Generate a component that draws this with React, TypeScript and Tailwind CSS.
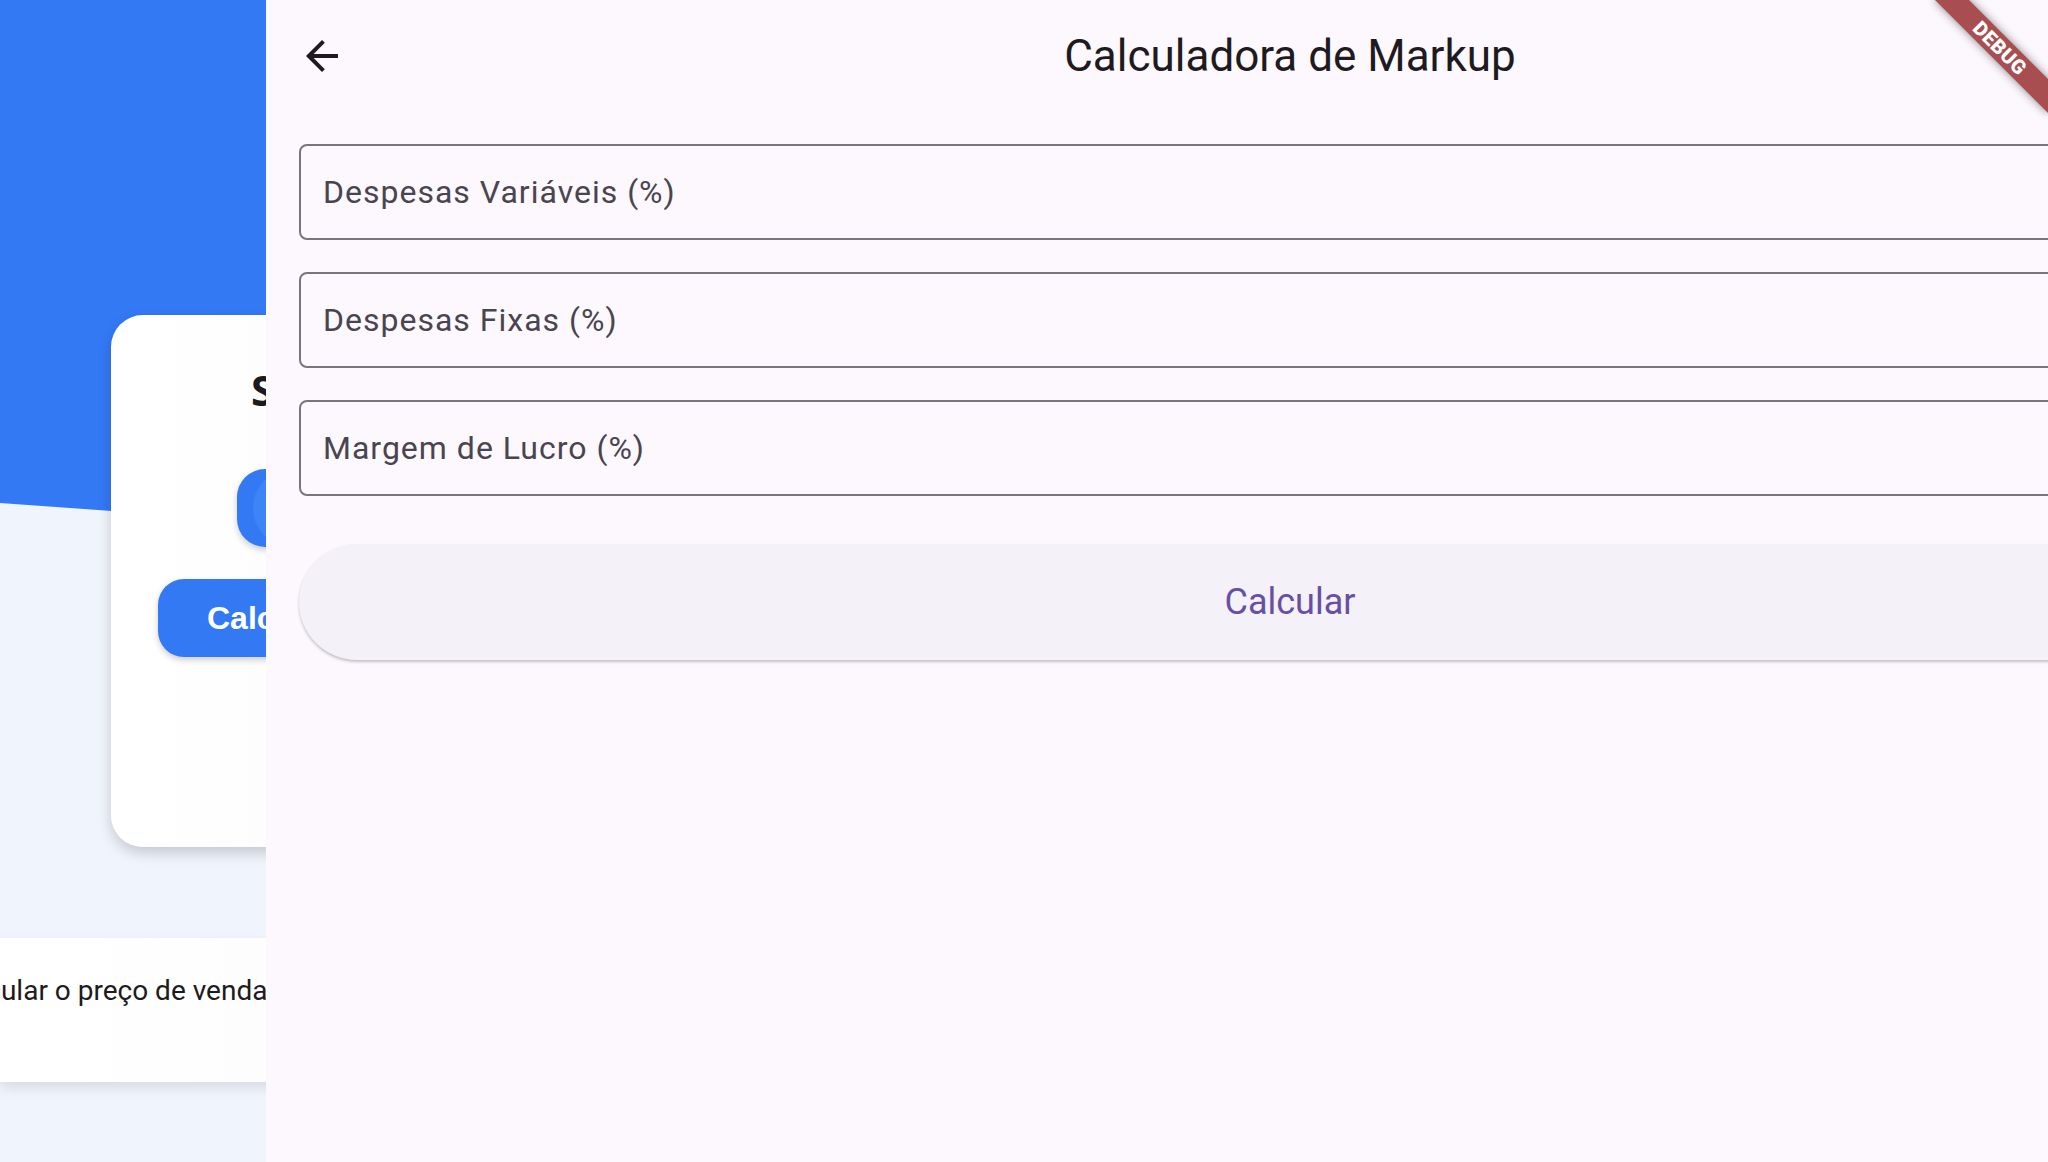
import React from "react";

function BackArrow() {
  return (
    <svg width="48" height="48" viewBox="0 0 24 24" aria-hidden="true">
      <path d="M20 11H7.83l5.59-5.59L12 4l-8 8 8 8 1.41-1.41L7.83 13H20v-2z" fill="#1d1b20" />
    </svg>
  );
}

function Field({ label }: { label: string }) {
  return (
    <div className="h-[96px] w-full rounded-[8px] border-2 border-[#79747e] flex items-center pl-[22px]">
      <span className="text-[32px] tracking-[1px] text-[#49454f] leading-none">{label}</span>
    </div>
  );
}

export default function App() {
  return (
    <div
      className="relative flex w-[2048px] h-[1162px] overflow-hidden bg-[#fdf7fe]"
      style={{ fontFamily: "Roboto, 'Noto Sans', sans-serif" }}
    >
      {/* Previous page (partially covered) */}
      <div className="relative w-[266px] shrink-0 h-full overflow-hidden bg-[#f0f4fd]">
        <div className="absolute left-0 top-0 w-full h-[530px] bg-[#3479f4] [clip-path:polygon(0_0,100%_0,100%_522px,0_503px)]" />
        <div className="relative pt-[315px]">
          <div className="ml-[111px] w-[700px] h-[532px] rounded-[32px] bg-gradient-to-r from-white to-[#f8f8f9] shadow-[0_6px_14px_rgba(0,0,0,0.18)] flex flex-col">
            <div
              className="mt-[47px] ml-[140px] h-[56px] leading-[56px] text-[42px] font-bold text-[#1b1b1f] whitespace-nowrap"
              style={{ fontFamily: "'Open Sans', 'Noto Sans', sans-serif" }}
            >
              Selecione o cálculo
            </div>
            <div className="mt-[51px] ml-[126px] h-[78px] w-[400px] rounded-[28px] bg-[#3479f4] shadow-[0_3px_6px_rgba(0,0,0,0.2)] flex overflow-hidden">
              <div className="ml-[16px] flex-1 rounded-l-[40px] bg-[#3d85f5]" />
            </div>
            <div className="mt-[32px] ml-[47px] h-[78px] w-[500px] rounded-[26px] bg-[#3479f4] shadow-[0_3px_6px_rgba(0,0,0,0.2)] flex items-center pl-[49px]">
              <span
                className="text-[32px] font-bold text-white whitespace-nowrap"
                style={{ fontFamily: "'Liberation Sans', Arial, sans-serif" }}
              >
                Calcular
              </span>
            </div>
          </div>
          <div className="mt-[91px] h-[144px] w-[800px] bg-gradient-to-r from-white to-[#fafafa] shadow-[0_6px_12px_rgba(0,0,0,0.1)] pt-[36px]">
            <div className="-ml-[54px] text-[28px] leading-[34px] text-[#1d1b20] whitespace-nowrap">
              Calcular o preço de venda
            </div>
          </div>
        </div>
      </div>

      {/* Current page */}
      <div className="w-[2048px] shrink-0 h-full bg-[#fdf7fe]">
        <div className="grid grid-cols-[112px_1fr_112px] h-[112px] items-center">
          <div className="flex justify-center items-center">
            <BackArrow />
          </div>
          <div className="text-center text-[44px] leading-none text-[#1d1b20]">Calculadora de Markup</div>
          <div />
        </div>
        <div className="px-[33px] pt-[32px] flex flex-col">
          <div className="flex flex-col gap-[32px]">
            <Field label="Despesas Variáveis (%)" />
            <Field label="Despesas Fixas (%)" />
            <Field label="Margem de Lucro (%)" />
          </div>
          <div className="mt-[48px] h-[116px] w-full rounded-full bg-[#f4f1f8] shadow-[0_2px_3px_rgba(0,0,0,0.22)] flex items-center justify-center">
            <span className="text-[36px] text-[#6750a4] leading-none">Calcular</span>
          </div>
        </div>
      </div>

      {/* Debug banner */}
      <div className="absolute left-[1920px] top-[36px] w-[160px] h-[24px] rotate-45 bg-[#a84e50] shadow-[0_0_10px_rgba(0,0,0,0.45)] flex items-center justify-center">
        <span className="text-[20px] font-black text-white leading-none tracking-[0.5px]">DEBUG</span>
      </div>
    </div>
  );
}
